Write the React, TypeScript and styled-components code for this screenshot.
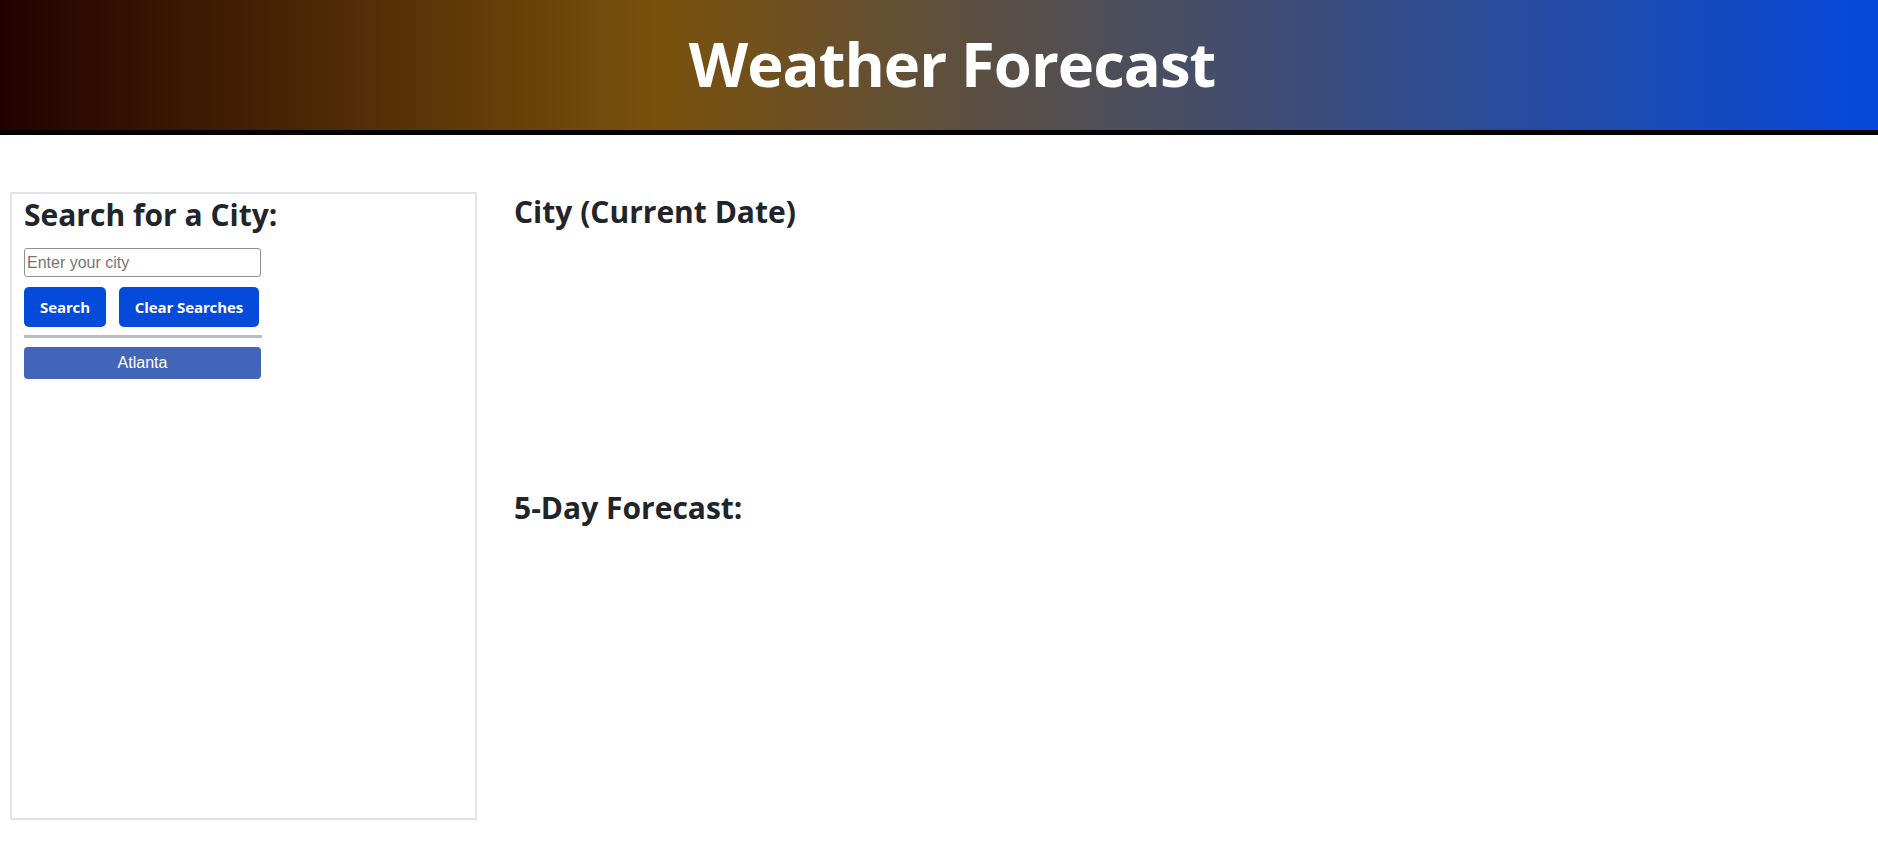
import React from "react";
import styled, { createGlobalStyle } from "styled-components";

const GlobalStyle = createGlobalStyle`
  html, body { margin: 0; padding: 0; background: #fff; }
  body { font-family: "Open Sans", "Noto Sans", sans-serif; color: #212529; }
  * { box-sizing: border-box; }
`;

const Header = styled.header`
  height: 135px;
  border-bottom: 5px solid #000;
  background: linear-gradient(90deg, #220200 0%, #7a510b 35%, #0549dc 100%);
  display: flex;
  align-items: center;
  justify-content: center;
`;

const Title = styled.h1`
  margin: 0 0 2px 26px;
  color: #fff;
  font-family: "Open Sans", sans-serif;
  font-weight: 700;
  font-size: 61.5px;
  letter-spacing: -1px;
  line-height: 1;
`;

const Layout = styled.main`
  display: grid;
  grid-template-columns: 467px 1fr;
  column-gap: 37px;
  padding: 57px 10px 0 10px;
`;

const Sidebar = styled.aside`
  height: 628px;
  border: 2px solid #e1e3e6;
  padding: 3px 12px 0;
  display: flex;
  flex-direction: column;
  align-items: flex-start;
`;

const Heading = styled.h3`
  margin: 0;
  font-family: "Open Sans", sans-serif;
  font-weight: 700;
  font-size: 30px;
  line-height: 36px;
  color: #212529;
`;

const CityInput = styled.input`
  margin-top: 15px;
  width: 237px;
  height: 29px;
  font-family: "Liberation Sans", Arial, sans-serif;
  font-size: 16px;
  padding: 1px 2px;
  border: 1px solid #8f8f8f;
  border-radius: 3px;
  &::placeholder { color: #757575; }
`;

const ButtonRow = styled.div`
  display: flex;
  gap: 13px;
  margin-top: 10px;
`;

const ActionButton = styled.button<{ $w: number }>`
  width: ${(p) => p.$w}px;
  height: 40px;
  border: none;
  border-radius: 5px;
  background: #044adb;
  color: #fff;
  font-family: "Open Sans", sans-serif;
  font-weight: 700;
  font-size: 15px;
  letter-spacing: -0.1px;
  padding: 0;
  cursor: pointer;
`;

const Divider = styled.hr`
  width: 238px;
  margin: 8px 0 0 0;
  border: none;
  height: 3px;
  background: #bcbcbc;
`;

const HistoryButton = styled.button`
  margin-top: 9px;
  width: 237px;
  height: 32px;
  border: none;
  border-radius: 4px;
  background: #4264b9;
  color: #fff;
  font-family: "Liberation Sans", Arial, sans-serif;
  font-size: 16px;
  cursor: pointer;
`;

const Content = styled.section`
  display: flex;
  flex-direction: column;
  padding-top: 2px;
`;

const CurrentBlock = styled.div`
  height: 296px;
`;

export default function App() {
  return (
    <>
      <GlobalStyle />
      <Header>
        <Title>Weather Forecast</Title>
      </Header>
      <Layout>
        <Sidebar>
          <Heading>Search for a City:</Heading>
          <CityInput placeholder="Enter your city" />
          <ButtonRow>
            <ActionButton $w={82}>Search</ActionButton>
            <ActionButton $w={140}>Clear Searches</ActionButton>
          </ButtonRow>
          <Divider />
          <HistoryButton>Atlanta</HistoryButton>
        </Sidebar>
        <Content>
          <CurrentBlock>
            <Heading>City (Current Date)</Heading>
          </CurrentBlock>
          <Heading>5-Day Forecast:</Heading>
        </Content>
      </Layout>
    </>
  );
}
